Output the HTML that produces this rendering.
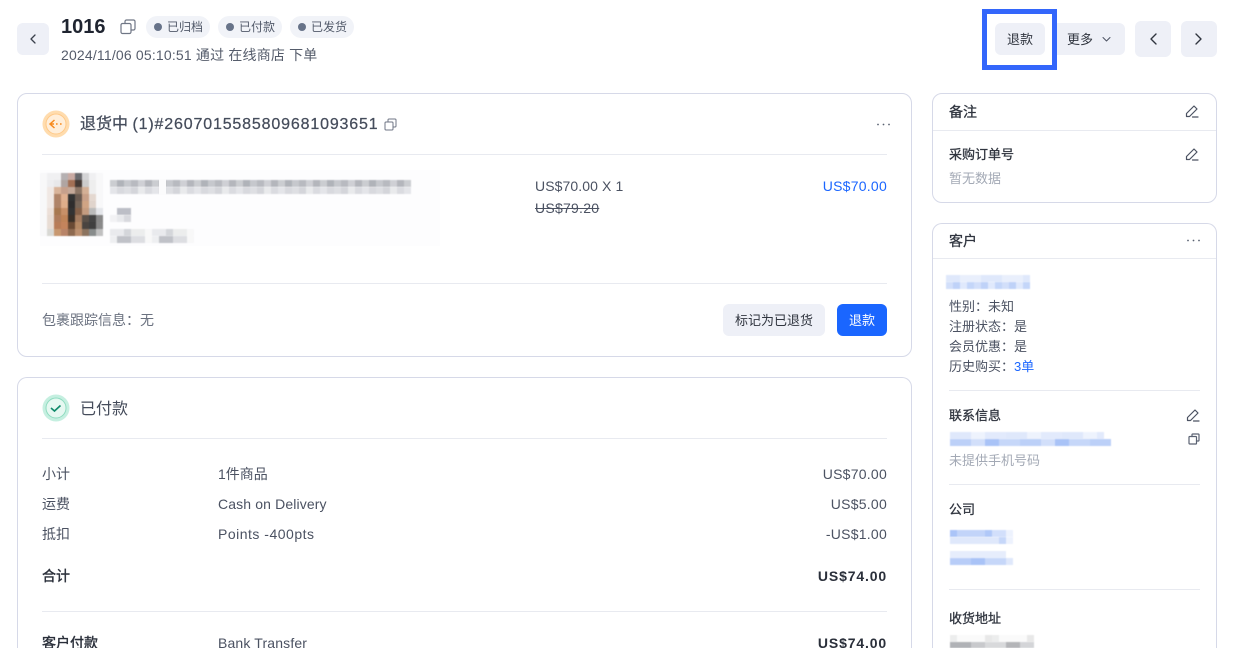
<!DOCTYPE html>
<html lang="zh"><head><meta charset="utf-8"><title>1016</title>
<style>
*{box-sizing:border-box}
html,body{margin:0;padding:0;width:1242px;height:648px;overflow:hidden;background:#fff}
body{position:relative;font-family:"Liberation Sans","Noto Sans CJK SC",sans-serif;font-size:14px;color:#4b5262}
.t{position:absolute;white-space:nowrap;line-height:20px;height:20px}
.r{text-align:right}
.p{letter-spacing:.25px}
.b{font-weight:400;-webkit-text-stroke:.4px #2a2f3a;color:#2a2f3a}
.bp{letter-spacing:.85px;font-weight:700;color:#2a2f3a}
.m{font-weight:400;-webkit-text-stroke:.3px #30353f;color:#30353f}
.box{position:absolute;background:#eef0f7;border-radius:6px}
.card{position:absolute;border:1px solid #d6d9e8;border-radius:10px;background:#fff}
.open{border-bottom:0;border-radius:10px 10px 0 0}
.hr{position:absolute;height:1px;background:#e8eaf0}
.tag{position:absolute;top:16px;height:22px;width:64px;border-radius:11px;background:#f1f3f8;font-size:12px;line-height:22px;padding-left:21px;color:#525a6a}
.tag:before{content:"";position:absolute;left:8px;top:7px;width:8px;height:8px;border-radius:50%;background:#677389}
svg{position:absolute;overflow:visible}
.ic{fill:none;stroke:#5a6272;stroke-width:1.2;stroke-linejoin:round;stroke-linecap:round}
.g{color:#6b7280}
.l{color:#a3a9b5}
.mz{position:absolute;filter:blur(.6px)}
</style></head><body>

<div class="box" style="left:17px;top:23px;width:32px;height:32px"></div>
<svg class="ic" style="left:17px;top:23px;stroke:#3a404c;stroke-width:1.3" width="32" height="32"><path d="M18 12l-4 4 4 4"/></svg>
<div class="t" style="left:61px;top:17px;font-size:20px;font-weight:700;color:#1f2430">1016</div>
<svg class="ic" style="left:120px;top:19px;stroke:#6f7685" width="16" height="16"><rect x="1" y="4.500" width="10" height="10" rx="1.500"/><path d="M5 4.500V2.500a1.500 1.500 0 0 1 1.500-1.500h7A1.500 1.500 0 0 1 15 2.500v7a1.500 1.500 0 0 1-1.500 1.500H11"/></svg>
<div class="tag" style="left:146px">已归档</div>
<div class="tag" style="left:218px">已付款</div>
<div class="tag" style="left:290px">已发货</div>
<div class="t" style="left:61px;top:45px;color:#555c6b;letter-spacing:.18px">2024/11/06 05:10:51 通过 在线商店 下单</div>

<div class="box" style="left:1040px;top:23px;width:85px;height:32px"></div>
<div class="t" style="left:1067px;top:30px;font-size:13px;color:#30353f">更多</div>
<svg class="ic" style="left:1102px;top:37px;stroke:#4b5262;stroke-width:1" width="10" height="6"><path d="M1 .5L4.500 4 8 .5"/></svg>
<div style="position:absolute;left:982px;top:9px;width:75px;height:61px;border:5px solid #3366fb;background:#fff"></div>
<div class="box" style="left:995px;top:23px;width:50px;height:32px"></div>
<div class="t" style="left:995px;top:30px;width:50px;text-align:center;font-size:13px;color:#30353f">退款</div>
<div class="box" style="left:1135px;top:21px;width:36px;height:36px"></div>
<svg class="ic" style="left:1135px;top:21px;stroke:#30353f;stroke-width:1.400" width="36" height="36"><path d="M21 13l-5 5 5 5"/></svg>
<div class="box" style="left:1181px;top:21px;width:36px;height:36px"></div>
<svg class="ic" style="left:1181px;top:21px;stroke:#30353f;stroke-width:1.400" width="36" height="36"><path d="M15 13l5 5-5 5"/></svg>

<div class="card" style="left:17px;top:93px;width:895px;height:264px"></div>
<svg style="left:42px;top:110px" width="28" height="28"><circle cx="14" cy="14" r="13.500" fill="#ffdcae"/><circle cx="14" cy="14" r="10" fill="#ffeed9" stroke="#ffc988"/><path d="M12.500 10L8 14l4.500 4M8.500 14h3.500" fill="none" stroke="#f78a1d" stroke-width="1.500"/><path d="M14 14h1.600M18 14h1.600" stroke="#f78a1d" stroke-width="1.500"/></svg>
<div class="t" style="left:80px;top:115px;font-size:16px;color:#454c5b;-webkit-text-stroke:.25px #454c5b">退货中 <span style="letter-spacing:.84px">(1)#2607015585809681093651</span></div>
<svg class="ic" style="left:384px;top:118px;stroke:#6f7685;stroke-width:1" width="13" height="13"><rect x="1" y="4" width="8" height="8" rx="1"/><path d="M4 4V2a1 1 0 0 1 1-1h6a1 1 0 0 1 1 1v6a1 1 0 0 1-1 1H9"/></svg>
<svg style="left:877px;top:123px" width="13" height="3"><g fill="#5a6272"><circle cx="1" cy="1.500" r=".9"/><circle cx="6.500" cy="1.500" r=".9"/><circle cx="12" cy="1.500" r=".9"/></g></svg>
<div class="hr" style="left:42px;top:154px;width:845px"></div>

<div style="position:absolute;left:40px;top:170px;width:400px;height:76px;background:#fdfdfe"></div>
<svg style="left:40px;top:173px;filter:blur(.6px)" width="63" height="63" shape-rendering="crispEdges"><g><rect x="0" y="0" width="63" height="63" fill="#f8f8f9"/>
<rect x="7" y="0" width="7" height="7" fill="#f0f0f2"/><rect x="14" y="0" width="7" height="7" fill="#f0f0f2"/><rect x="21" y="0" width="7" height="7" fill="#b5b0b2"/><rect x="28" y="0" width="7" height="7" fill="#c9aaa3"/><rect x="35" y="0" width="7" height="7" fill="#6a6a6e"/><rect x="42" y="0" width="7" height="7" fill="#d4d4d6"/><rect x="49" y="0" width="7" height="7" fill="#f0f0f2"/>
<rect x="7" y="7" width="7" height="7" fill="#eeeef0"/><rect x="14" y="7" width="7" height="7" fill="#e8e8ea"/><rect x="21" y="7" width="7" height="7" fill="#b0a5a2"/><rect x="28" y="7" width="7" height="7" fill="#a37055"/><rect x="35" y="7" width="7" height="7" fill="#453a35"/><rect x="42" y="7" width="7" height="7" fill="#ccc"/><rect x="49" y="7" width="7" height="7" fill="#eee"/>
<rect x="7" y="14" width="7" height="7" fill="#f0e8e4"/><rect x="14" y="14" width="7" height="7" fill="#d9b49a"/><rect x="21" y="14" width="7" height="7" fill="#c6a08c"/><rect x="28" y="14" width="7" height="7" fill="#c4a898"/><rect x="35" y="14" width="7" height="7" fill="#8c7565"/><rect x="42" y="14" width="7" height="7" fill="#d4b096"/><rect x="49" y="14" width="7" height="7" fill="#eee"/>
<rect x="7" y="21" width="7" height="7" fill="#f0e8e4"/><rect x="14" y="21" width="7" height="7" fill="#b08468"/><rect x="21" y="21" width="7" height="7" fill="#dfb090"/><rect x="28" y="21" width="7" height="7" fill="#333"/><rect x="35" y="21" width="7" height="7" fill="#6a5a50"/><rect x="42" y="21" width="7" height="7" fill="#c8a088"/><rect x="49" y="21" width="7" height="7" fill="#e4d8d0"/>
<rect x="7" y="28" width="7" height="7" fill="#f0e8e4"/><rect x="14" y="28" width="7" height="7" fill="#b08468"/><rect x="21" y="28" width="7" height="7" fill="#dfae8a"/><rect x="28" y="28" width="7" height="7" fill="#2f2d2d"/><rect x="35" y="28" width="7" height="7" fill="#766558"/><rect x="42" y="28" width="7" height="7" fill="#d0a484"/><rect x="49" y="28" width="7" height="7" fill="#e0d4cc"/>
<rect x="7" y="35" width="7" height="7" fill="#ecdfd8"/><rect x="14" y="35" width="7" height="7" fill="#a87850"/><rect x="21" y="35" width="7" height="7" fill="#c89068"/><rect x="28" y="35" width="7" height="7" fill="#333"/><rect x="35" y="35" width="7" height="7" fill="#846048"/><rect x="42" y="35" width="7" height="7" fill="#c49c80"/><rect x="49" y="35" width="7" height="7" fill="#bbb"/><rect x="56" y="35" width="7" height="7" fill="#e4e6ea"/>
<rect x="7" y="42" width="7" height="7" fill="#e8dcd4"/><rect x="14" y="42" width="7" height="7" fill="#b07c5c"/><rect x="21" y="42" width="7" height="7" fill="#c08458"/><rect x="28" y="42" width="7" height="7" fill="#3a3028"/><rect x="35" y="42" width="7" height="7" fill="#a47c60"/><rect x="42" y="42" width="7" height="7" fill="#5a5048"/><rect x="49" y="42" width="7" height="7" fill="#444"/><rect x="56" y="42" width="7" height="7" fill="#888"/>
<rect x="7" y="49" width="7" height="7" fill="#e8dcd4"/><rect x="14" y="49" width="7" height="7" fill="#b87c58"/><rect x="21" y="49" width="7" height="7" fill="#c4845c"/><rect x="28" y="49" width="7" height="7" fill="#6a4a34"/><rect x="35" y="49" width="7" height="7" fill="#b48864"/><rect x="42" y="49" width="7" height="7" fill="#4a4440"/><rect x="49" y="49" width="7" height="7" fill="#404040"/><rect x="56" y="49" width="7" height="7" fill="#8a8a8a"/>
<rect x="7" y="56" width="7" height="7" fill="#d8d8d4"/><rect x="14" y="56" width="7" height="7" fill="#c89870"/><rect x="21" y="56" width="7" height="7" fill="#b88468"/><rect x="28" y="56" width="7" height="7" fill="#8e6a50"/><rect x="35" y="56" width="7" height="7" fill="#bc9070"/><rect x="42" y="56" width="7" height="7" fill="#8c7460"/><rect x="49" y="56" width="7" height="7" fill="#888c8c"/><rect x="56" y="56" width="7" height="7" fill="#c0c0c0"/></g></svg>

<div class="mz" style="left:110px;top:180px;width:301px;height:7px;background:repeating-linear-gradient(90deg,#cbcdd1 0 7px,#b0b3b9 7px 14px,#c6c8cd 14px 21px,#b8bac0 21px 28px,#cfd0d5 28px 35px,#b4b6bc 35px 42px)"></div>
<div class="mz" style="left:110px;top:187px;width:301px;height:7px;background:repeating-linear-gradient(90deg,#e4e5e9 0 7px,#d8d9de 7px 14px,#dedfe3 14px 21px,#d4d5da 21px 28px,#e9eaec 28px 35px,#dadbe0 35px 42px)"></div>
<div style="position:absolute;left:159px;top:179px;width:7px;height:16px;background:#fbfbfc"></div>
<div class="mz" style="left:117px;top:208px;width:14px;height:7px;background:#bcbec6"></div>
<div class="mz" style="left:110px;top:215px;width:21px;height:7px;background:linear-gradient(90deg,#f2f2f4 0 7px,#e8e9ec 7px 14px,#d8d9de 14px 21px)"></div>
<div class="mz" style="left:110px;top:229px;width:84px;height:7px;background:repeating-linear-gradient(90deg,#e9eaed 0 14px,#d4d6da 14px 21px,#eceded 21px 35px,#f8f8f8 35px 42px)"></div>
<div class="mz" style="left:110px;top:236px;width:84px;height:7px;background:repeating-linear-gradient(90deg,#eeeff1 0 7px,#c0c2c8 7px 21px,#dddee2 21px 35px,#f8f8f8 35px 42px)"></div>

<div class="t" style="left:535px;top:176px;letter-spacing:.1px">US$70.00 X 1</div>
<div class="t p" style="left:535px;top:198px;text-decoration:line-through">US$79.20</div>
<div class="t r p" style="right:355px;top:176px;color:#1b66ff">US$70.00</div>
<div class="hr" style="left:42px;top:283px;width:845px"></div>
<div class="t g" style="left:42px;top:310px">包裹跟踪信息：无</div>
<div class="box" style="left:723px;top:304px;width:102px;height:32px"></div>
<div class="t" style="left:723px;top:311px;width:102px;text-align:center;font-size:13px;color:#30353f">标记为已退货</div>
<div class="box" style="left:837px;top:304px;width:50px;height:32px;background:#1a66ff"></div>
<div class="t" style="left:837px;top:311px;width:50px;text-align:center;font-size:13px;color:#fff">退款</div>

<div class="card open" style="left:17px;top:377px;width:895px;height:271px"></div>
<svg style="left:42px;top:394px" width="28" height="28"><circle cx="14" cy="14" r="13.500" fill="#c5efe0"/><circle cx="14" cy="14" r="10" fill="#e6f8f1" stroke="#8fdcc0"/><path d="M9 14l3.500 3 6-5.500" fill="none" stroke="#0f8a6a" stroke-width="1.600"/></svg>
<div class="t" style="left:80px;top:400px;font-size:16px;color:#454c5b">已付款</div>
<div class="hr" style="left:42px;top:438px;width:845px"></div>
<div class="t" style="left:42px;top:464px">小计</div><div class="t" style="left:218px;top:464px">1件商品</div><div class="t r p" style="right:355px;top:464px">US$70.00</div>
<div class="t" style="left:42px;top:494px">运费</div><div class="t" style="left:218px;top:494px;letter-spacing:.13px">Cash on Delivery</div><div class="t r p" style="right:355px;top:494px">US$5.00</div>
<div class="t" style="left:42px;top:524px">抵扣</div><div class="t" style="left:218px;top:524px;letter-spacing:.5px">Points -400pts</div><div class="t r p" style="right:355px;top:524px">-US$1.00</div>
<div class="t b" style="left:42px;top:566px">合计</div><div class="t r bp" style="right:355px;top:566px">US$74.00</div>
<div class="hr" style="left:42px;top:611px;width:845px"></div>
<div class="t b" style="left:42px;top:633px;height:15px;overflow:hidden">客户付款</div><div class="t" style="left:218px;top:633px;height:15px;overflow:hidden;letter-spacing:.15px">Bank Transfer</div><div class="t r bp" style="right:355px;top:633px;height:15px;overflow:hidden">US$74.00</div>

<div class="card" style="left:932px;top:93px;width:285px;height:110px"></div>
<div class="t m" style="left:949px;top:102px">备注</div>
<svg class="ic" style="left:1185px;top:104px;stroke:#4b5262" width="14" height="14"><path d="M1.500 12.500V9.500L9 2l3 3-7.500 7.500zM7.500 13H13"/></svg>
<div class="hr" style="left:933px;top:130px;width:283px"></div>
<div class="t m" style="left:949px;top:145px;font-size:13px">采购订单号</div>
<svg class="ic" style="left:1185px;top:147px;stroke:#4b5262" width="14" height="14"><path d="M1.500 12.500V9.500L9 2l3 3-7.500 7.500zM7.500 13H13"/></svg>
<div class="t l" style="left:949px;top:169px;font-size:13px">暂无数据</div>

<div class="card open" style="left:932px;top:223px;width:285px;height:425px"></div>
<div class="t m" style="left:949px;top:231px">客户</div>
<svg style="left:1187px;top:239px" width="13" height="3"><g fill="#5a6272"><circle cx="1" cy="1.500" r=".9"/><circle cx="6.500" cy="1.500" r=".9"/><circle cx="12" cy="1.500" r=".9"/></g></svg>
<div class="hr" style="left:933px;top:258px;width:283px"></div>
<div class="mz" style="left:946px;top:275px;width:84px;height:7px;background:repeating-linear-gradient(90deg,#dfe8fb 0 14px,#e9effc 14px 35px,#dfe8fb 35px 42px)"></div>
<div class="mz" style="left:946px;top:282px;width:84px;height:7px;background:repeating-linear-gradient(90deg,#d2dffa 0 7px,#bfd2f8 7px 14px,#e0e9fc 14px 21px,#c4d6f9 21px 28px)"></div>
<div class="t" style="left:949px;top:297px;font-size:13px">性别：未知</div>
<div class="t" style="left:949px;top:317px;font-size:13px">注册状态：是</div>
<div class="t" style="left:949px;top:337px;font-size:13px">会员优惠：是</div>
<div class="t" style="left:949px;top:357px;font-size:13px">历史购买：<span style="color:#1b66ff">3单</span></div>
<div class="hr" style="left:949px;top:390px;width:251px"></div>
<div class="t m" style="left:949px;top:406px;font-size:13px">联系信息</div>
<svg class="ic" style="left:1186px;top:408px;stroke:#4b5262" width="14" height="14"><path d="M1.500 12.500V9.500L9 2l3 3-7.500 7.500zM7.500 13H13"/></svg>
<div class="mz" style="left:950px;top:432px;width:154px;height:7px;background:repeating-linear-gradient(90deg,#dfe8fb 0 21px,#eef3fd 21px 35px,#e2eafc 35px 56px)"></div>
<div class="mz" style="left:950px;top:439px;width:161px;height:7px;background:repeating-linear-gradient(90deg,#bcd0f8 0 21px,#d2dffa 21px 35px,#a9c3f7 35px 49px,#c6d7f9 49px 70px)"></div>
<svg class="ic" style="left:1188px;top:433px" width="12" height="12"><rect x="1" y="3.500" width="7.500" height="7.500" rx=".8"/><path d="M4 3.500V1.800A.8.8 0 0 1 4.800 1h5.400a.8.8 0 0 1 .8.8v5.400a.8.8 0 0 1-.8.800H8.500"/></svg>
<div class="t l" style="left:949px;top:451px;font-size:13px">未提供手机号码</div>
<div class="hr" style="left:949px;top:484px;width:251px"></div>
<div class="t m" style="left:949px;top:500px;font-size:13px">公司</div>
<div class="mz" style="left:950px;top:530px;width:63px;height:7px;background:linear-gradient(90deg,#aac4f8 0 7px,#c2d4f9 7px 35px,#b0c8f8 35px 42px,#d2dffb 42px 56px,#edf2fd 56px)"></div>
<div class="mz" style="left:950px;top:537px;width:63px;height:7px;background:linear-gradient(90deg,#dfe8fb 0 49px,#c6d7f9 49px 56px,#edf2fd 56px)"></div>
<div class="mz" style="left:950px;top:551px;width:56px;height:7px;background:#e6edfc"></div>
<div class="mz" style="left:950px;top:558px;width:63px;height:7px;background:linear-gradient(90deg,#b8cdf8 0 21px,#a9c3f7 21px 35px,#c6d7f9 35px 56px,#dfe8fb 56px)"></div>
<div class="hr" style="left:949px;top:589px;width:251px"></div>
<div class="t m" style="left:949px;top:609px;font-size:13px">收货地址</div>
<div class="mz" style="left:950px;top:635px;width:84px;height:7px;background:repeating-linear-gradient(90deg,#eceded 0 7px,#fafafa 7px 35px,#e8e8e8 35px 42px)"></div>
<div class="mz" style="left:950px;top:642px;width:84px;height:6px;background:repeating-linear-gradient(90deg,#b0b2b6 0 21px,#c8c9cc 21px 35px,#d8d9db 35px 56px,#b4b5b8 56px 70px,#d4d5d8 70px 84px)"></div>
</body></html>
